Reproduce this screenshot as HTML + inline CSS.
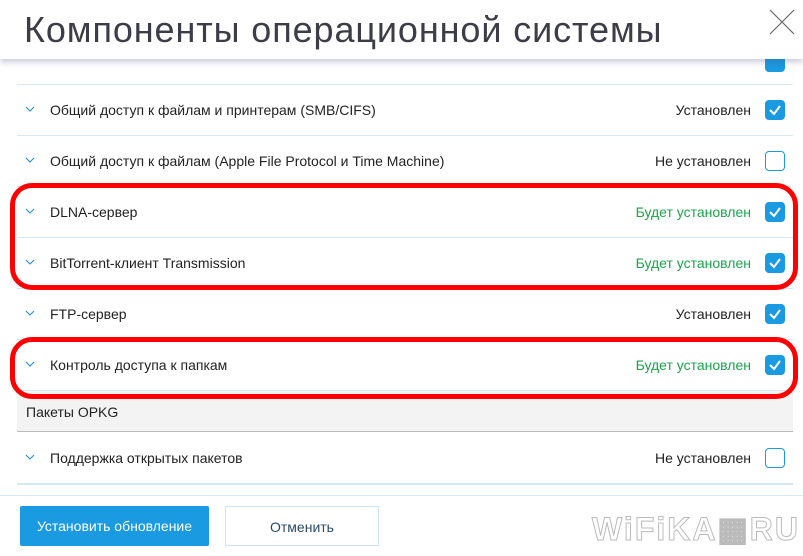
<!DOCTYPE html><html><head><meta charset="utf-8"><style>
body{margin:0;width:803px;height:556px;overflow:hidden;background:#fff;font-family:"Liberation Sans",Arial,sans-serif;position:relative}
.hdr{position:absolute;left:0;top:0;width:803px;height:59px;background:#fff;box-shadow:0 3px 6px rgba(80,80,140,.3);z-index:2}
.hdr h1{margin:0;position:absolute;left:24px;top:9px;font-weight:normal;font-size:36px;color:#3d3d48;letter-spacing:0.9px}
.x{position:absolute;left:769px;top:9px}
.row{position:absolute;left:17px;width:776px;height:51px;border-bottom:1px solid #d6e8f4;font-size:14px;color:#222}
.row .ch{position:absolute;left:8px;top:21px}
.row .t{position:absolute;left:33px;top:18px}
.row .s{position:absolute;right:42px;top:18px}
.row .s.g{color:#1aa64a}
.cb{position:absolute;left:748px;top:16px;width:20px;height:20px;border-radius:4px;box-sizing:border-box}
.cb.on{background:#1a9ae0}
.cb.off{border:1.5px solid #1a9ae0;background:#fff}
.ov{position:absolute;border:5px solid #f00;border-radius:22px;box-sizing:border-box;z-index:3}
.btn{position:absolute;top:506px;height:40px;font-size:14px;text-align:center;line-height:40px;box-sizing:border-box}
</style></head><body>
<div class="hdr"><h1>Компоненты операционной системы</h1>
<svg class="x" width="26" height="26"><path d="M1 1L25 25M25 1L1 25" stroke="#666" stroke-width="1.2"/></svg></div>
<div class="cb on" style="position:absolute;left:765px;top:52px;z-index:1"></div>
<div style="position:absolute;left:17px;top:84px;width:776px;border-top:1px solid #d6e8f4"></div>

<div class="row" style="top:84px"><svg class="ch" width="10" height="8"><path d="M1 2L5 6L9 2" stroke="#1a8ad0" fill="none"/></svg><span class="t">Общий доступ к файлам и принтерам (SMB/CIFS)</span><span class="s">Установлен</span><div class="cb on"><svg width="20" height="20"><path d="M5 10L9 14L15 6" stroke="#fff" stroke-width="2" fill="none"/></svg></div></div>
<div class="row" style="top:135px"><svg class="ch" width="10" height="8"><path d="M1 2L5 6L9 2" stroke="#1a8ad0" fill="none"/></svg><span class="t">Общий доступ к файлам (Apple File Protocol и Time Machine)</span><span class="s">Не установлен</span><div class="cb off"></div></div>
<div class="row" style="top:186px"><svg class="ch" width="10" height="8"><path d="M1 2L5 6L9 2" stroke="#1a8ad0" fill="none"/></svg><span class="t">DLNA-сервер</span><span class="s g">Будет установлен</span><div class="cb on"><svg width="20" height="20"><path d="M5 10L9 14L15 6" stroke="#fff" stroke-width="2" fill="none"/></svg></div></div>
<div class="row" style="top:237px"><svg class="ch" width="10" height="8"><path d="M1 2L5 6L9 2" stroke="#1a8ad0" fill="none"/></svg><span class="t">BitTorrent-клиент Transmission</span><span class="s g">Будет установлен</span><div class="cb on"><svg width="20" height="20"><path d="M5 10L9 14L15 6" stroke="#fff" stroke-width="2" fill="none"/></svg></div></div>
<div class="row" style="top:288px"><svg class="ch" width="10" height="8"><path d="M1 2L5 6L9 2" stroke="#1a8ad0" fill="none"/></svg><span class="t">FTP-сервер</span><span class="s">Установлен</span><div class="cb on"><svg width="20" height="20"><path d="M5 10L9 14L15 6" stroke="#fff" stroke-width="2" fill="none"/></svg></div></div>
<div class="row" style="top:339px"><svg class="ch" width="10" height="8"><path d="M1 2L5 6L9 2" stroke="#1a8ad0" fill="none"/></svg><span class="t">Контроль доступа к папкам</span><span class="s g">Будет установлен</span><div class="cb on"><svg width="20" height="20"><path d="M5 10L9 14L15 6" stroke="#fff" stroke-width="2" fill="none"/></svg></div></div>
<div style="position:absolute;left:17px;top:391px;width:776px;height:40px;background:#f3f3f3;border-bottom:1px solid #bbb;font-size:14px;color:#222"><span style="position:absolute;left:9px;top:13px">Пакеты OPKG</span></div>
<div class="row" style="top:432px;border-bottom:2px solid #d6e8f4"><svg class="ch" width="10" height="8"><path d="M1 2L5 6L9 2" stroke="#1a8ad0" fill="none"/></svg><span class="t">Поддержка открытых пакетов</span><span class="s">Не установлен</span><div class="cb off"></div></div>
<div style="position:absolute;left:0;top:495px;width:803px;border-top:1px solid #d6e8f4"></div>
<div class="btn" style="left:20px;width:189px;background:#1a9ae0;color:#fff;border-radius:2px">Установить обновление</div>
<div class="btn" style="left:225px;width:154px;border:1px solid #cde4f3;color:#2a4a6a">Отменить</div>
<div style="position:absolute;left:592px;top:510px;font-size:32px;font-weight:bold;color:#fff;-webkit-text-stroke:1px #bbb;letter-spacing:2px">WiFiKA▦RU</div>
<div class="ov" style="left:10px;top:183px;width:788px;height:107px"></div>
<div class="ov" style="left:10px;top:337px;width:788px;height:62px"></div>
</body></html>
